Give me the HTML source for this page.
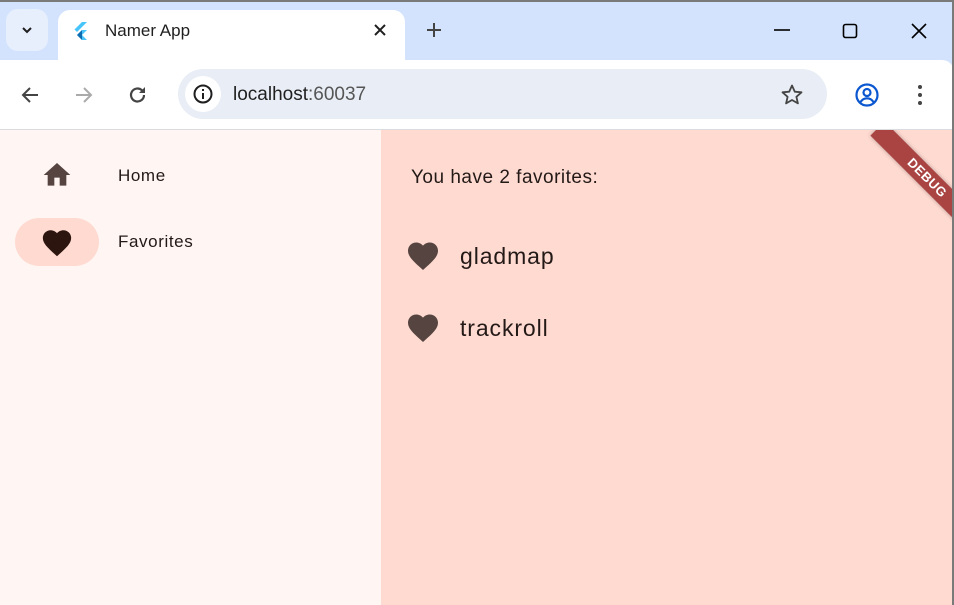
<!DOCTYPE html>
<html><head><style>
*{margin:0;padding:0;box-sizing:border-box}
body{width:954px;height:605px;overflow:hidden;font-family:"Liberation Sans",sans-serif;background:#d3e3fd;position:relative}
.abs{position:absolute}
</style></head><body>
<div class="abs" style="left:0;top:0;width:954px;height:2px;background:#7a7a7a"></div>
<div class="abs" style="right:0;top:0;width:2px;height:605px;background:#7a7a7a;z-index:9"></div>
<div class="abs" style="left:6px;top:9px;width:42px;height:42px;border-radius:12px;background:#e8effc"></div>
<svg class="abs" style="left:20px;top:23px" width="14" height="14" viewBox="0 0 14 14"><path d="M3 5l4 4 4-4" fill="none" stroke="#1f1f1f" stroke-width="2"/></svg>
<div class="abs" style="left:58px;top:10px;width:347px;height:52px;background:#fff;border-radius:12px 12px 0 0"></div>
<svg class="abs" style="left:73px;top:22px" width="16" height="18" viewBox="0 0 16 18"><path d="M9 0h5L4 10 1.5 7.5z" fill="#47c5fb"/><path d="M9 8h5l-5 5 5 5H9l-5-5z" fill="#47c5fb"/><path d="M4 13l5-5v10z" fill="#00569e" opacity=".8"/></svg>
<div class="abs" style="left:105px;top:21px;font-size:17px;color:#1f1f1f">Namer App</div>
<svg class="abs" style="left:373px;top:23px" width="14" height="14"><path d="M2 2l10 10M12 2L2 12" stroke="#1f1f1f" stroke-width="2"/></svg>
<svg class="abs" style="left:426px;top:22px" width="16" height="16"><path d="M8 1v14M1 8h14" stroke="#444" stroke-width="2"/></svg>
<svg class="abs" style="left:773px;top:24px" width="18" height="12"><path d="M1 6h16" stroke="#000" stroke-width="1.6"/></svg>
<svg class="abs" style="left:842px;top:23px" width="16" height="16"><rect x="1.5" y="1.5" width="13" height="13" rx="2" fill="none" stroke="#000" stroke-width="1.6"/></svg>
<svg class="abs" style="left:911px;top:23px" width="16" height="16"><path d="M1 1l14 14M15 1L1 15" stroke="#000" stroke-width="1.6"/></svg>
<div class="abs" style="left:0;top:60px;width:954px;height:70px;background:#fff;border-bottom:1px solid #dadce0;border-radius:12px 12px 0 0"></div>
<div class="abs" style="left:0;top:60px;width:60px;height:20px;background:#fff"></div>
<svg class="abs" style="left:20px;top:85px" width="20" height="20"><path d="M18 10H3M10 3l-7 7 7 7" fill="none" stroke="#444" stroke-width="2"/></svg>
<svg class="abs" style="left:74px;top:85px" width="20" height="20"><path d="M2 10h15M10 3l7 7-7 7" fill="none" stroke="#aaa" stroke-width="2"/></svg>
<svg class="abs" style="left:128px;top:85px" width="20" height="20"><path d="M16 10a6.5 6.5 0 1 1-2-4.7" fill="none" stroke="#444" stroke-width="2.2"/><path d="M17 2v6h-6z" fill="#444"/></svg>
<div class="abs" style="left:178px;top:69px;width:649px;height:50px;border-radius:25px;background:#e9eef6"></div>
<div class="abs" style="left:185px;top:76px;width:36px;height:36px;border-radius:18px;background:#fff"></div>
<svg class="abs" style="left:193px;top:84px" width="20" height="20"><circle cx="10" cy="10" r="8.5" fill="none" stroke="#1f1f1f" stroke-width="2"/><rect x="9" y="9" width="2" height="6" fill="#1f1f1f"/><rect x="9" y="5" width="2" height="2" fill="#1f1f1f"/></svg>
<div class="abs" style="left:233px;top:84px;font-size:19px;color:#1f1f1f">localhost<span style="color:#555">:60037</span></div>
<svg class="abs" style="left:780px;top:83px" width="24" height="24" viewBox="0 0 24 24"><path d="M12 2.5l2.8 6.2 6.7.6-5.1 4.5 1.5 6.6L12 17l-5.9 3.4 1.5-6.6-5.1-4.5 6.7-.6z" fill="none" stroke="#444" stroke-width="1.8" stroke-linejoin="round"/></svg>
<svg class="abs" style="left:854px;top:82px" width="26" height="26" viewBox="0 0 26 26"><circle cx="13" cy="13" r="10.5" fill="none" stroke="#0b57d0" stroke-width="2.2"/><circle cx="13" cy="10.5" r="3.5" fill="none" stroke="#0b57d0" stroke-width="2.2"/><path d="M6.5 20c2-3 4-3.7 6.5-3.7s4.5.7 6.5 3.7" fill="none" stroke="#0b57d0" stroke-width="2.2"/></svg>
<svg class="abs" style="left:916px;top:84px" width="8" height="22"><circle cx="4" cy="3" r="2" fill="#444"/><circle cx="4" cy="11" r="2" fill="#444"/><circle cx="4" cy="19" r="2" fill="#444"/></svg>
<div class="abs" style="left:0;top:130px;width:381px;height:475px;background:#fff6f4"></div>
<div class="abs" style="left:381px;top:130px;width:573px;height:475px;background:#ffdad1;overflow:hidden">
  <div class="abs" style="left:476px;top:38px;width:140px;height:20px;background:#a94443;transform:rotate(45deg);color:#fff;font-weight:bold;font-size:13px;line-height:20px;text-align:center;letter-spacing:.5px;box-shadow:0 0 4px rgba(0,0,0,.3)">DEBUG</div>
</div>
<svg class="abs" style="left:40px;top:159px" width="34" height="32" viewBox="0 0 24 24"><path d="M10 20v-6h4v6h5v-8h3L12 3 2 12h3v8z" fill="#554440"/></svg>
<div class="abs" style="left:118px;top:166px;font-size:17px;color:#231917;letter-spacing:.6px">Home</div>
<div class="abs" style="left:15px;top:218px;width:84px;height:48px;border-radius:24px;background:#ffdad1"></div>
<svg class="abs" style="left:39px;top:226px" width="36" height="34" viewBox="0 0 24 24"><path d="M12 21.35l-1.45-1.32C5.4 15.36 2 12.28 2 8.5 2 5.42 4.42 3 7.5 3c1.74 0 3.41.81 4.5 2.09C13.09 3.81 14.76 3 16.5 3 19.58 3 22 5.42 22 8.5c0 3.78-3.4 6.86-8.55 11.54z" fill="#2c150f"/></svg>
<div class="abs" style="left:118px;top:232px;font-size:17px;color:#231917;letter-spacing:.6px">Favorites</div>
<div class="abs" style="left:411px;top:167px;font-size:19px;color:#231917;letter-spacing:.5px">You have 2 favorites:</div>
<svg class="abs" style="left:405px;top:238px" width="36" height="36" viewBox="0 0 24 24"><path d="M12 21.35l-1.45-1.32C5.4 15.36 2 12.28 2 8.5 2 5.42 4.42 3 7.5 3c1.74 0 3.41.81 4.5 2.09C13.09 3.81 14.76 3 16.5 3 19.58 3 22 5.42 22 8.5c0 3.78-3.4 6.86-8.55 11.54z" fill="#554440"/></svg>
<div class="abs" style="left:460px;top:243px;font-size:23px;color:#231917;letter-spacing:.9px">gladmap</div>
<svg class="abs" style="left:405px;top:310px" width="36" height="36" viewBox="0 0 24 24"><path d="M12 21.35l-1.45-1.32C5.4 15.36 2 12.28 2 8.5 2 5.42 4.42 3 7.5 3c1.74 0 3.41.81 4.5 2.09C13.09 3.81 14.76 3 16.5 3 19.58 3 22 5.42 22 8.5c0 3.78-3.4 6.86-8.55 11.54z" fill="#554440"/></svg>
<div class="abs" style="left:460px;top:315px;font-size:23px;color:#231917;letter-spacing:.9px">trackroll</div>
</body></html>
